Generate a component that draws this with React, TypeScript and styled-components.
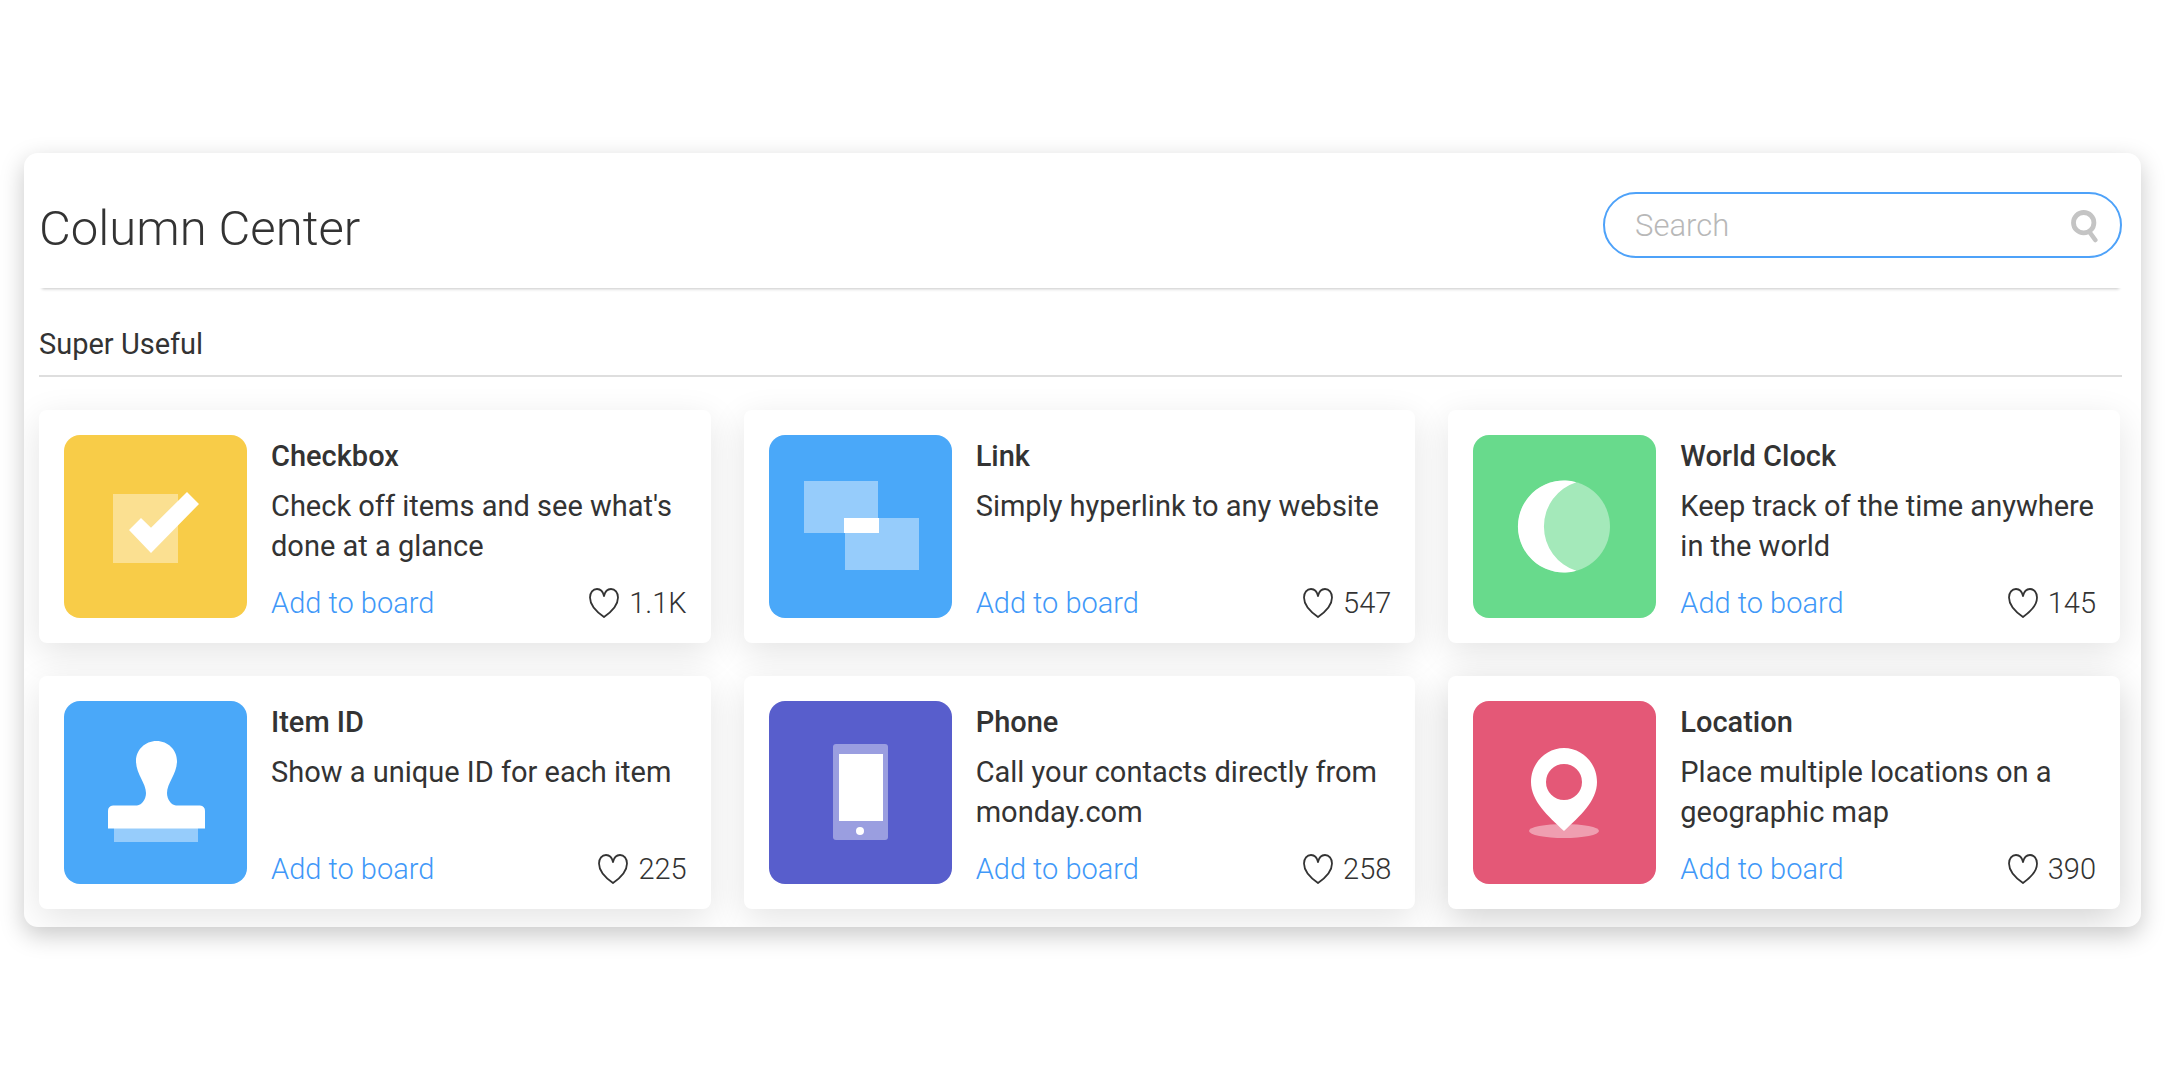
import React from "react";
import styled, { createGlobalStyle } from "styled-components";

const Global = createGlobalStyle`
  *, *::before, *::after { box-sizing: border-box; }
  body {
    margin: 0;
    background: #fff;
    color: #333;
    font-family: Roboto, "Liberation Sans", sans-serif;
  }
`;

const Page = styled.div`
  min-height: 100vh;
  display: flex;
  align-items: center;
  padding: 24px;
`;

const Panel = styled.main`
  flex: 1;
  min-width: 0;
  padding: 39px 19px 18px 15px;
  background: #fff;
  border-radius: 14px;
  box-shadow: 0 8px 24px rgba(0, 0, 0, 0.22);
  overflow: hidden;
`;

const Header = styled.header`
  display: flex;
  align-items: flex-start;
  justify-content: space-between;
  gap: 24px;
  height: 96px;
  box-shadow: 0 4px 3px -3px rgba(0, 0, 0, 0.22);
`;

const Title = styled.h1`
  margin: 0;
  padding-top: 5px;
  font-size: 49px;
  line-height: 64px;
  font-weight: 300;
`;

const SearchBox = styled.label`
  display: flex;
  align-items: center;
  flex: 0 1 519px;
  height: 66px;
  padding: 0 22px 0 30px;
  border: 2px solid #4ea2f9;
  border-radius: 33px;
`;

const SearchInput = styled.input`
  flex: 1;
  min-width: 0;
  padding: 2px 0 0;
  border: 0;
  outline: 0;
  background: transparent;
  color: #333;
  font: 300 31px/40px Roboto, "Liberation Sans", sans-serif;
  &::placeholder { color: #b8b8b8; opacity: 1; }
`;

const SectionTitle = styled.h2`
  margin: 36px 0 33px;
  padding-bottom: 11px;
  border-bottom: 2px solid #dedede;
  font-size: 29px;
  line-height: 40px;
  font-weight: 400;
`;

const Grid = styled.div`
  display: grid;
  grid-template-columns: repeat(3, minmax(0, 1fr));
  gap: 33px;
  padding-right: 2px;
`;

const Card = styled.article<{ $raised?: boolean }>`
  display: flex;
  gap: 24px;
  padding: 25px 24px 25px 25px;
  background: #fff;
  border-radius: 8px;
  box-shadow: 0 10px 36px rgba(0, 0, 0, ${(p) => (p.$raised ? 0.18 : 0.11)});
`;

const Tile = styled.div<{ $color: string }>`
  flex: none;
  width: 183px;
  height: 183px;
  border-radius: 16px;
  background: ${(p) => p.$color};
  svg { display: block; }
`;

const Body = styled.div`
  flex: 1;
  min-width: 0;
  display: flex;
  flex-direction: column;
  padding-top: 1px;
`;

const Name = styled.h3`
  margin: 0 0 10px;
  font-size: 29px;
  line-height: 40px;
  font-weight: 500;
`;

const Text = styled.p`
  margin: 0;
  font-size: 29px;
  line-height: 40px;
`;

const Foot = styled.div`
  display: flex;
  align-items: center;
  justify-content: space-between;
  margin-top: auto;
  font-size: 29px;
  line-height: 30px;
  font-weight: 300;
`;

const AddButton = styled.button`
  padding: 0;
  border: 0;
  background: none;
  color: #4098f8;
  font: inherit;
  cursor: pointer;
`;

const Likes = styled.span`
  display: flex;
  align-items: center;
  gap: 10px;
`;

const Heart = () => (
  <svg width="30" height="30" viewBox="0 0 30 30" fill="none" stroke="#333" strokeWidth="1.8" strokeLinejoin="round" aria-hidden="true">
    <path d="M15 8C14 3.500 11.500 1 8 1C4 1 1 4.500 1 9.500C1 17 8.500 24.500 15 29C21.500 24.500 29 17 29 9.500C29 4.500 26 1 22 1C18.500 1 16 3.500 15 8Z" />
  </svg>
);

const Magnifier = () => (
  <svg width="27" height="36" viewBox="0 0 27 36" fill="none" stroke="#c4c4c4" strokeLinecap="round" aria-hidden="true">
    <circle cx="12.700" cy="15.700" r="10.200" strokeWidth="4.800" />
    <path d="M18.500 25L24.300 33" strokeWidth="4.600" />
  </svg>
);

const pics: Record<string, React.ReactNode> = {
  check: (
    <>
      <rect x="49" y="59" width="65" height="69" opacity=".4" />
      <path d="M65 95L77 83L87 92.700L123 57L135 69L87 118Z" />
    </>
  ),
  link: (
    <>
      <path d="M35 46h74v37h-34v15H35ZM110 83h40v52H76V98h34Z" opacity=".42" />
      <rect x="75" y="83" width="35" height="15" />
    </>
  ),
  clock: (
    <>
      <circle cx="91" cy="91.500" r="46" opacity=".4" />
      <path d="M103.300 47.200A46 46 0 1 0 103.300 135.800A46.500 46.500 0 0 1 103.300 47.200Z" />
    </>
  ),
  stamp: (
    <>
      <rect x="50" y="127" width="84" height="14" opacity=".42" />
      <path d="M92.500 40C104 40 113 49 113 60C113 73 103 82 103 92C103 98 107 104 112 104.500H136Q141 105 141 110V127.500H44V110Q44 105 49 104.500H73C78 104 82 98 82 92C82 82 72 73 72 60C72 49 81 40 92.500 40Z" />
    </>
  ),
  phone: (
    <>
      <rect x="64" y="43" width="55" height="96" rx="3" opacity=".4" />
      <rect x="70" y="53" width="44" height="67" />
      <circle cx="91" cy="130" r="4" />
    </>
  ),
  pin: (
    <>
      <ellipse cx="91" cy="130" rx="35" ry="7" opacity=".42" />
      <path fillRule="evenodd" d="M91 47C109 47 124 62 124 81C124 100 107 115 91 130C75 115 58 100 58 81C58 62 73 47 91 47ZM91 63A18 18 0 1 0 91 99A18 18 0 1 0 91 63Z" />
    </>
  ),
};

const items = [
  { pic: "check", color: "#f8cc48", name: "Checkbox", text: "Check off items and see what's done at a glance", likes: "1.1K" },
  { pic: "link", color: "#4aa8f9", name: "Link", text: "Simply hyperlink to any website", likes: "547" },
  { pic: "clock", color: "#68da8c", name: "World Clock", text: "Keep track of the time anywhere in the world", likes: "145" },
  { pic: "stamp", color: "#4aa8f9", name: "Item ID", text: "Show a unique ID for each item", likes: "225" },
  { pic: "phone", color: "#585ecc", name: "Phone", text: "Call your contacts directly from monday.com", likes: "258" },
  { pic: "pin", color: "#e45877", name: "Location", text: "Place multiple locations on a geographic map", likes: "390", raised: true },
];

export default function App() {
  return (
    <Page>
      <Global />
      <Panel>
        <Header>
          <Title>Column Center</Title>
          <SearchBox>
            <SearchInput type="text" placeholder="Search" aria-label="Search" />
            <Magnifier />
          </SearchBox>
        </Header>
        <SectionTitle>Super Useful</SectionTitle>
        <Grid>
          {items.map((item) => (
            <Card key={item.name} $raised={item.raised}>
              <Tile $color={item.color}>
                <svg width="183" height="183" viewBox="0 0 183 183" fill="#fff" aria-hidden="true">
                  {pics[item.pic]}
                </svg>
              </Tile>
              <Body>
                <Name>{item.name}</Name>
                <Text>{item.text}</Text>
                <Foot>
                  <AddButton type="button">Add to board</AddButton>
                  <Likes>
                    <Heart />
                    {item.likes}
                  </Likes>
                </Foot>
              </Body>
            </Card>
          ))}
        </Grid>
      </Panel>
    </Page>
  );
}
